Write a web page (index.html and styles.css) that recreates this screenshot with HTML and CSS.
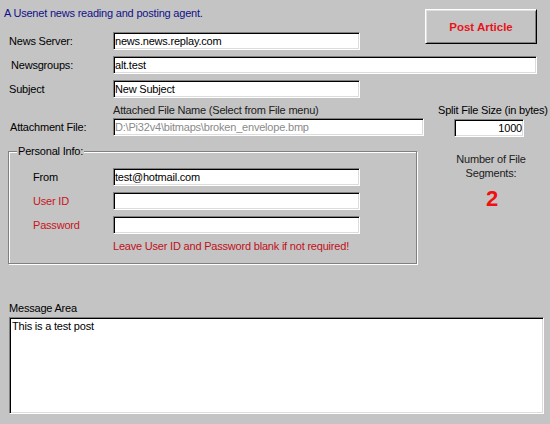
FILE: index.html
```html
<!DOCTYPE html>
<html>
<head>
<meta charset="utf-8">
<title>Usenet Poster</title>
<link rel="stylesheet" href="styles.css">
</head>
<body>
<div class="app">
  <div class="top">
    <div class="top-left">
      <p class="tagline">A Usenet news reading and posting agent.</p>
      <div class="row">
        <label class="lbl">News Server:</label>
        <input class="field w-std" type="text" value="news.news.replay.com">
      </div>
    </div>
    <button class="post" type="button">Post Article</button>
  </div>

  <div class="row gap">
    <label class="lbl lbl-indent">Newsgroups:</label>
    <input class="field w-wide" type="text" value="alt.test">
  </div>
  <div class="row gap">
    <label class="lbl">Subject</label>
    <input class="field w-std" type="text" value="New Subject">
  </div>

  <div class="mid">
    <div class="mid-left">
      <div class="caption">Attached File Name (Select from File menu)</div>
      <div class="row row-attach">
        <label class="lbl">Attachment File:</label>
        <input class="field w-attach disabled" type="text" value="D:\Pi32v4\bitmaps\broken_envelope.bmp" readonly>
      </div>

      <fieldset class="group">
        <legend class="legend">Personal Info:</legend>
        <div class="grow first">
          <label class="glbl">From</label>
          <input class="field w-std" type="text" value="test@hotmail.com">
        </div>
        <div class="grow">
          <label class="glbl red">User ID</label>
          <input class="field w-std" type="text" value="">
        </div>
        <div class="grow">
          <label class="glbl red">Password</label>
          <input class="field w-std" type="password" value="">
        </div>
        <p class="note">Leave User ID and Password blank if not required!</p>
      </fieldset>
    </div>

    <div class="mid-right">
      <div class="caption">Split File Size (in bytes)</div>
      <input class="field w-split" type="text" value="1000">
      <div class="segments">Number of File<br>Segments:</div>
      <div class="seg-count">2</div>
    </div>
  </div>

  <div class="msg-label">Message Area</div>
  <textarea class="message">This is a test post</textarea>
</div>
</body>
</html>
```

FILE: styles.css
```css
* {
  box-sizing: border-box;
}

html, body {
  margin: 0;
  padding: 0;
  background: #c4c4c4;
}

.app {
  width: 550px;
  height: 424px;
  overflow: hidden;
  background: #c4c4c4;
  font-family: "Liberation Sans", Arial, sans-serif;
  font-size: 11px;
  letter-spacing: -0.2px;
  line-height: 14px;
  color: #000;
}

.top {
  display: flex;
  justify-content: space-between;
  align-items: flex-start;
}

.tagline {
  margin: 6px 0 0 4px;
  color: #10108a;
}

.top-left .row {
  margin-top: 12px;
}

.row {
  display: flex;
  align-items: center;
  padding-left: 9px;
}

.row.gap {
  margin-top: 6px;
}

.lbl {
  width: 104px;
  flex: none;
}

.lbl-indent {
  padding-left: 2px;
}

.field {
  display: block;
  height: 18px;
  margin: 0;
  padding: 0 1px;
  font: inherit;
  letter-spacing: inherit;
  color: #000;
  background: #fff;
  border-style: solid;
  border-width: 1px;
  border-color: #808080 #fff #fff #808080;
  box-shadow: inset 1px 1px 0 #000, inset -1px -1px 0 #dcdcdc;
  outline: none;
}

.w-std { width: 247px; }
.w-wide { width: 424px; }
.w-attach { width: 311px; }

.disabled {
  color: #8a8a8a;
}

.post {
  margin: 9px 13px 0 0;
  width: 112px;
  height: 35px;
  padding: 0;
  font-family: "Liberation Sans", Arial, sans-serif;
  font-size: 11.5px;
  font-weight: bold;
  letter-spacing: 0;
  color: #e8141c;
  background: #c4c4c4;
  border-style: solid;
  border-width: 1px;
  border-color: #fff #000 #000 #fff;
  box-shadow: inset 1px 1px 0 #e0e0e0, inset -1px -1px 0 #808080;
}

.mid {
  display: flex;
}

.mid-left {
  width: 424px;
  flex: none;
}

.caption {
  margin-top: 5px;
  height: 14px;
  white-space: nowrap;
}

.mid-left .caption {
  padding-left: 113px;
  color: #202020;
}

.row-attach {
  margin-top: 1px;
  padding-left: 10px;
}

.row-attach .lbl {
  width: 103px;
}

.group {
  margin: 8px 0 0 8px;
  padding: 0 0 10px 24px;
  width: 409px;
  min-inline-size: 0;
  border: 1px solid #808080;
  box-shadow: inset 1px 1px 0 #fff, 1px 1px 0 #fff;
}

.legend {
  margin-left: -16px;
  padding: 0 1px;
  line-height: 14px;
  background: #c4c4c4;
}

.grow {
  display: flex;
  align-items: center;
  margin-top: 6px;
}

.grow.first {
  margin-top: 10px;
}

.glbl {
  width: 80px;
  flex: none;
}

.red {
  color: #c8141c;
}

.note {
  margin: 5px 0 0 80px;
  color: #c0101a;
  white-space: nowrap;
}

.mid-right {
  margin-left: 8px;
  width: 118px;
  flex: none;
  text-align: center;
}

.mid-right .caption {
  text-align: left;
  padding-left: 6px;
}

.w-split {
  width: 70px;
  margin: 2px 0 0 22px;
  text-align: right;
}

.segments {
  margin-top: 15px;
  color: #202020;
}

.seg-count {
  margin-top: 8px;
  font-size: 22px;
  line-height: 22px;
  font-weight: bold;
  color: #f01010;
  letter-spacing: 0;
  padding-left: 2px;
}

.msg-label {
  margin: 37px 0 0 9px;
  height: 14px;
}

.message {
  display: block;
  margin: 2px 0 0 9px;
  width: 535px;
  height: 97px;
  padding: 1px 2px;
  resize: none;
  font: inherit;
  letter-spacing: inherit;
  color: #000;
  background: #fff;
  border-style: solid;
  border-width: 1px;
  border-color: #808080 #fff #fff #808080;
  box-shadow: inset 1px 1px 0 #000, inset -1px -1px 0 #dcdcdc;
  outline: none;
  overflow: hidden;
}
```
